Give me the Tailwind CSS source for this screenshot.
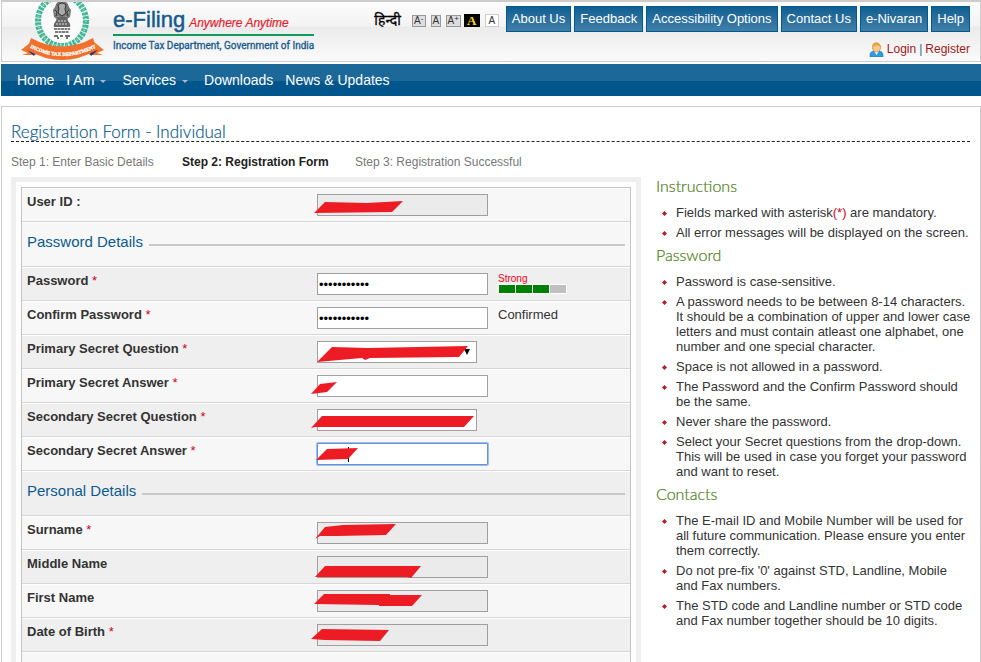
<!DOCTYPE html>
<html lang="en">
<head>
<meta charset="utf-8">
<title>e-Filing - Registration Form</title>
<script src="https://cdn.jsdelivr.net/npm/@tailwindcss/browser@4"></script>
</head>
<body class="h-screen overflow-hidden bg-white font-['Liberation_Sans',Arial,sans-serif] text-[13px] leading-[15px] text-[#333]">
<header class="ml-px border border-t-4 border-[#ccc] flex justify-between h-16 -mt-0.5 bg-[linear-gradient(#fcfcfc_0%,#f3f3f3_41%,#ebebeb_42%,#fafafa_100%)]">
  <a href="#" class="flex pl-[19px]" aria-label="Income Tax Department home">
    <svg class="w-[84px] h-[60px] shrink-0" viewBox="0 0 84 60">
      <g transform="translate(0 -2)">
      <ellipse cx="41" cy="21" rx="24" ry="25" fill="none" stroke="#3fb596" stroke-width="6" stroke-dasharray="3 1"/>
      <ellipse cx="41" cy="21" rx="24" ry="25" fill="none" stroke="#9bdcc9" stroke-width="2" stroke-dasharray="1 2"/>
      <ellipse cx="41" cy="21" rx="20" ry="22" fill="#fafafa"/>
      <path d="M34 7q1-6 7-6t7 6l2 3-1 7-3 2-1-3-2 4h-4l-2-4-1 3-3-2-1-7z" fill="#777"/>
      <path d="M37 5q4-4 8 0l-1 4 1 4-4 3-4-3 1-4zM34 10l2 2-1 4M48 10l-2 2 1 4" fill="#aaa" stroke="#333" stroke-width="1"/>
      <path d="M36 17h10l1 4q3 3 2 6H33q-1-3 2-6z" fill="#666"/>
      <path d="M37 21h8M35 24h12" stroke="#ddd" stroke-dasharray="2 1"/>
      <path d="M33 29h16M34 32h14" stroke="#555" stroke-width="1.5" stroke-dasharray="3 .5"/>
      <path d="M33 36h4M39 36h3M44 36h5M36 38h2M45 38h2" stroke="#444" stroke-width="1.5"/>
      <path d="M0 50l10-8 5 13H1l6-2zM83 50l-10-8-5 13h14l-6-2z" fill="#f0782c"/>
      <path d="M6 50l9 2-2 4zM77 50l-9 2 2 4z" fill="#24348d"/>
      <path d="M10 38Q41 55 72 38L76 50Q41 70 6 50z" fill="#f0702c"/>
      <path id="ribbon" d="M8 47Q41 65 76 47" fill="none"/>
      <text class="font-['Liberation_Serif',serif] font-bold" font-size="5" fill="#fff" stroke="#fff" stroke-width=".3"><textPath href="#ribbon" startOffset="50%" text-anchor="middle">INCOME TAX DEPARTMENT</textPath></text>
      </g>
    </svg>
    <span class="pl-2 pt-1.5 flex flex-col">
      <span class="flex items-baseline gap-1 border-b-2 border-[#0c9b5c] pr-3.5 h-7"><span class="text-[22px] leading-6 text-[#165b8d] [-webkit-text-stroke:0.5px]">e-Filing</span><em class="text-[12px] text-[#e8202c] [-webkit-text-stroke:0.2px]">Anywhere Anytime</em></span>
      <span class="text-[10px] leading-4 text-[#165b8d] pt-0.5 font-['Roboto',sans-serif] [-webkit-text-stroke:0.3px] whitespace-nowrap">Income Tax Department, Government of India</span>
    </span>
  </a>
  <div class="pr-2.5 pt-1 flex flex-col items-end">
    <div class="flex items-start gap-[3px] whitespace-nowrap">
      <a href="#" lang="hi" class="text-[14px] leading-7 text-black pr-2 font-['Noto_Sans','Lohit_Devanagari',sans-serif] [-webkit-text-stroke:0.3px]">हिन्दी</a>
      <div class="flex gap-[5px] items-center pt-2 pr-1 text-[10px] leading-[10px] text-[#333]">
        <button class="border border-[#999] bg-[#ddd] w-3.5 h-3 flex justify-center">A<span class="text-[8px] leading-[5px]">-</span></button>
        <button class="border border-[#999] bg-[#ddd] w-2.5 h-3 flex justify-center">A</button>
        <button class="border border-[#999] bg-[#ddd] w-[15px] h-3 flex justify-center">A<span class="text-[8px] leading-[6px]">+</span></button>
        <button class="bg-black text-[#fd0] font-bold font-['Liberation_Serif',serif] text-[13px] w-4 h-[13px] -ml-0.5">A</button>
        <button class="border border-[#ccc] bg-white w-3.5 h-[13px]">A</button>
      </div>
      <nav class="flex gap-[3px] text-[13px] leading-6 text-white">
        <a href="#" class="border border-[#005a8e] bg-linear-to-b from-[#0d5f91] to-[#417fa8] px-[5px]">About Us</a>
        <a href="#" class="border border-[#005a8e] bg-linear-to-b from-[#0d5f91] to-[#417fa8] px-[5px]">Feedback</a>
        <a href="#" class="border border-[#005a8e] bg-linear-to-b from-[#0d5f91] to-[#417fa8] px-[5px]">Accessibility Options</a>
        <a href="#" class="border border-[#005a8e] bg-linear-to-b from-[#0d5f91] to-[#417fa8] px-[5px]">Contact Us</a>
        <a href="#" class="border border-[#005a8e] bg-linear-to-b from-[#0d5f91] to-[#417fa8] px-[5px]">e-Nivaran</a>
        <a href="#" class="border border-[#005a8e] bg-linear-to-b from-[#0d5f91] to-[#417fa8] px-[5px]">Help</a>
      </nav>
    </div>
    <div class="flex items-center gap-[3px] text-[12px] text-[#9c1c1c] pt-2">
      <svg class="size-[15px]" viewBox="0 0 15 15"><path d="M1 15v-3q1-3 4-3h5q3 0 4 3v3z" fill="#2f9be0" stroke="#1b6fb3" stroke-width=".5"/><path d="M5 9l2.500 4L10 9z" fill="#fff"/><ellipse cx="7.500" cy="5.500" rx="4" ry="4.500" fill="#f8c98c" stroke="#c98a3c" stroke-width=".8"/><path d="M3.500 5Q3 0 7.500.5T11.500 5Q9 2.500 7 3.500T3.500 5z" fill="#e9a03a"/></svg>
      <a href="#">Login</a><span class="text-[#1c6898]">|</span><a href="#">Register</a>
    </div>
  </div>
</header>
<nav class="ml-px mt-0.5 h-8 bg-[linear-gradient(#1c6898_17px,#00568c_17px)] text-white text-[14px] leading-8 flex pl-4 whitespace-nowrap">
  <a href="#" class="pr-3">Home</a>
  <a href="#" class="pr-4 flex items-center gap-1.5">I Am <svg class="w-1.5 h-1 mt-1" viewBox="0 0 6 4"><path d="M0 0h6L3 3z" fill="#a9b8c4"/></svg></a>
  <a href="#" class="pr-4 flex items-center gap-1.5">Services <svg class="w-1.5 h-1 mt-1" viewBox="0 0 6 4"><path d="M0 0h6L3 3z" fill="#a9b8c4"/></svg></a>
  <a href="#" class="pr-3">Downloads</a>
  <a href="#">News &amp; Updates</a>
</nav>
<main class="ml-px mt-2.5 border border-[#ccc] pl-[9px] pr-2.5">
  <h1 class="pt-4 h-[35px] border-b border-dashed border-[#222] text-[17px] leading-[18px] text-[#0b5a8f] font-['Lato',sans-serif] font-light [-webkit-text-stroke:0.2px]">Registration Form - Individual</h1>
  <ol class="flex text-[12px] leading-4 text-[#777] mt-3">
    <li class="w-[171px]">Step 1: Enter Basic Details</li>
    <li class="w-[173px] font-bold text-[#222]">Step 2: Registration Form</li>
    <li>Step 3: Registration Successful</li>
  </ol>
  <div class="flex gap-[15px] items-start mt-[7px] -mr-1.5">
    <form class="flex-1 border-[5px] border-[#efefef] p-[5px]">
      <div class="border border-[#c4c4c4]">
        <div class="flex h-[34px] border-t border-t-white border-b border-b-[#d6d6d6] bg-[#f7f7f7] pl-[5px]">
          <label for="uid" class="w-[290px] pt-1 leading-[18px] font-bold">User ID :</label>
          <div class="relative pt-[5px]"><input id="uid" readonly class="block w-[171px] h-[22px] border border-[#a0a0a0] bg-[#ebebeb] px-0.5"><svg class="absolute left-0 top-[5px] w-40 h-[22px] overflow-visible pointer-events-none" viewBox="0 0 160 22"><path d="M-3 19L8 8 50 9 86 7 75 18z" fill="#ed1c24"/></svg></div>
        </div>
        <div class="h-[45px] border-t border-t-white border-b border-b-[#d6d6d6] bg-[#f7f7f7] px-[5px] flex items-start gap-1.5 pt-2.5">
          <h2 class="text-[15px] leading-[18px] text-[#0b5a8f]">Password Details</h2><span class="flex-1 h-0.5 bg-[#c8c8c8] mt-[11px]"></span>
        </div>
        <div class="flex h-[34px] border-t border-t-white border-b border-b-[#d6d6d6] bg-[#efefef] pl-[5px]">
          <label for="pw" class="w-[290px] pt-1 leading-[18px] font-bold">Password <span class="font-normal text-[#d0021b]">*</span></label>
          <div class="pt-[5px]"><input id="pw" type="password" value="password123" class="block w-[171px] h-[22px] border border-[#a0a0a0] bg-white text-black px-px"></div>
          <div class="pl-2.5 pt-1.5 text-[10px] leading-[10px] text-[#f0001c]">Strong
            <div class="flex gap-px border border-white bg-white"><i class="w-4 h-2 bg-[#008000]"></i><i class="w-4 h-2 bg-[#008000]"></i><i class="w-4 h-2 bg-[#008000]"></i><i class="w-4 h-2 bg-[#c0c0c0]"></i></div>
          </div>
        </div>
        <div class="flex h-[34px] border-t border-t-white border-b border-b-[#d6d6d6] bg-[#f7f7f7] pl-[5px]">
          <label for="cpw" class="w-[290px] pt-1 leading-[18px] font-bold">Confirm Password <span class="font-normal text-[#d0021b]">*</span></label>
          <div class="pt-[5px]"><input id="cpw" type="password" value="password123" class="block w-[171px] h-[22px] border border-[#a0a0a0] bg-white text-black px-px"></div>
          <span class="pl-2.5 pt-1 leading-[18px]">Confirmed</span>
        </div>
        <div class="flex h-[34px] border-t border-t-white border-b border-b-[#d6d6d6] bg-[#efefef] pl-[5px]">
          <label for="psq" class="w-[290px] pt-1 leading-[18px] font-bold">Primary Secret Question <span class="font-normal text-[#d0021b]">*</span></label>
          <div class="relative pt-[5px]"><select id="psq" class="block appearance-none w-40 h-[22px] border border-[#a0a0a0] bg-white px-1"><option></option></select><svg class="absolute left-0 top-[5px] w-40 h-[22px] overflow-visible pointer-events-none" viewBox="0 0 160 22"><path d="M147 8h6l-3 6z" fill="#000"/><path d="M0 21L15 6 51 7 151 5 142 16 53 17 48 19 45 17z" fill="#ed1c24"/></svg></div>
        </div>
        <div class="flex h-[34px] border-t border-t-white border-b border-b-[#d6d6d6] bg-[#f7f7f7] pl-[5px]">
          <label for="psa" class="w-[290px] pt-1 leading-[18px] font-bold">Primary Secret Answer <span class="font-normal text-[#d0021b]">*</span></label>
          <div class="relative pt-[5px]"><input id="psa" class="block w-[171px] h-[22px] border border-[#a0a0a0] bg-white px-0.5"><svg class="absolute left-0 top-[5px] w-40 h-[22px] overflow-visible pointer-events-none" viewBox="0 0 160 22"><path d="M-6 19L3 9 20 7 10 17z" fill="#ed1c24"/></svg></div>
        </div>
        <div class="flex h-[34px] border-t border-t-white border-b border-b-[#d6d6d6] bg-[#efefef] pl-[5px]">
          <label for="ssq" class="w-[290px] pt-1 leading-[18px] font-bold">Secondary Secret Question <span class="font-normal text-[#d0021b]">*</span></label>
          <div class="relative pt-[5px]"><select id="ssq" class="block appearance-none w-40 h-[22px] border border-[#a0a0a0] bg-white px-1"><option></option></select><svg class="absolute left-0 top-[5px] w-40 h-[22px] overflow-visible pointer-events-none" viewBox="0 0 160 22"><path d="M-6 19L5 7H157L147 18H-2z" fill="#ed1c24"/></svg></div>
        </div>
        <div class="flex h-[34px] border-t border-t-white border-b border-b-[#d6d6d6] bg-[#f7f7f7] pl-[5px]">
          <label for="ssa" class="w-[290px] pt-1 leading-[18px] font-bold">Secondary Secret Answer <span class="font-normal text-[#d0021b]">*</span></label>
          <div class="relative pt-[5px]"><input id="ssa" class="block w-[171px] h-[22px] border border-[#6a92d8] ring-1 ring-[#9dbcf0] rounded-[1px] bg-white px-0.5"><svg class="absolute left-0 top-[5px] w-40 h-[22px] overflow-visible pointer-events-none" viewBox="0 0 160 22"><path d="M31 4h1v15h-1z"/><path d="M-1 17L10 6 41 5 31 16z" fill="#ed1c24"/></svg></div>
        </div>
        <div class="h-[45px] border-t border-t-white border-b border-b-[#d6d6d6] bg-[#efefef] px-[5px] flex items-start gap-1.5 pt-2.5">
          <h2 class="text-[15px] leading-[18px] text-[#0b5a8f]">Personal Details</h2><span class="flex-1 h-0.5 bg-[#c8c8c8] mt-[11px]"></span>
        </div>
        <div class="flex h-[34px] border-t border-t-white border-b border-b-[#d6d6d6] bg-[#f7f7f7] pl-[5px]">
          <label for="sn" class="w-[290px] pt-1 leading-[18px] font-bold">Surname <span class="font-normal text-[#d0021b]">*</span></label>
          <div class="relative pt-[5px]"><input id="sn" readonly class="block w-[171px] h-[22px] border border-[#a0a0a0] bg-[#ebebeb] px-0.5"><svg class="absolute left-0 top-[5px] w-40 h-[22px] overflow-visible pointer-events-none" viewBox="0 0 160 22"><path d="M-2 17L8 5 26 3 79 2 69 13 20 14 3 14z" fill="#ed1c24"/></svg></div>
        </div>
        <div class="flex h-[34px] border-t border-t-white border-b border-b-[#d6d6d6] bg-[#efefef] pl-[5px]">
          <label for="mn" class="w-[290px] pt-1 leading-[18px] font-bold">Middle Name</label>
          <div class="relative pt-[5px]"><input id="mn" readonly class="block w-[171px] h-[22px] border border-[#a0a0a0] bg-[#ebebeb] px-0.5"><svg class="absolute left-0 top-[5px] w-40 h-[22px] overflow-visible pointer-events-none" viewBox="0 0 160 22"><path d="M-2 21L8 10H104L94 22 90 21z" fill="#ed1c24"/></svg></div>
        </div>
        <div class="flex h-[34px] border-t border-t-white border-b border-b-[#d6d6d6] bg-[#f7f7f7] pl-[5px]">
          <label for="fn" class="w-[290px] pt-1 leading-[18px] font-bold">First Name</label>
          <div class="relative pt-[5px]"><input id="fn" readonly class="block w-[171px] h-[22px] border border-[#a0a0a0] bg-[#ebebeb] px-0.5"><svg class="absolute left-0 top-[5px] w-40 h-[22px] overflow-visible pointer-events-none" viewBox="0 0 160 22"><path d="M-3 14L7 4H73V5H105L95 16H62V15z" fill="#ed1c24"/></svg></div>
        </div>
        <div class="flex h-[34px] border-t border-t-white border-b border-b-[#d6d6d6] bg-[#efefef] pl-[5px]">
          <label for="dob" class="w-[290px] pt-1 leading-[18px] font-bold">Date of Birth <span class="font-normal text-[#d0021b]">*</span></label>
          <div class="relative pt-[5px]"><input id="dob" readonly class="block w-[171px] h-[22px] border border-[#a0a0a0] bg-[#ebebeb] px-0.5"><svg class="absolute left-0 top-[5px] w-40 h-[22px] overflow-visible pointer-events-none" viewBox="0 0 160 22"><path d="M-6 15L5 5 72 6 63 17 8 16z" fill="#ed1c24"/></svg></div>
        </div>
        <div class="h-[34px] border-t border-t-white bg-[#f7f7f7]"></div>
      </div>
    </form>
    <aside class="w-[320px]">
      <h2 class="text-[16px] leading-[18px] text-[#4b7a14] font-['Lato',sans-serif] font-light [-webkit-text-stroke:0.2px] mb-2.5">Instructions</h2>
      <ul class="flex flex-col gap-[5px] pl-5 mb-1.5">
        <li class="relative"><svg class="absolute -left-3.5 top-[6px] size-[5px]" viewBox="0 0 5 5"><path d="M2.500 0L5 2.500 2.500 5 0 2.500z" fill="#b0202c"/></svg>Fields marked with asterisk<span class="text-[#d0021b]">(*)</span> are mandatory.</li>
        <li class="relative"><svg class="absolute -left-3.5 top-[6px] size-[5px]" viewBox="0 0 5 5"><path d="M2.500 0L5 2.500 2.500 5 0 2.500z" fill="#b0202c"/></svg>All error messages will be displayed on the screen.</li>
      </ul>
      <h2 class="text-[16px] leading-[18px] text-[#4b7a14] font-['Lato',sans-serif] font-light [-webkit-text-stroke:0.2px] mb-2.5">Password</h2>
      <ul class="flex flex-col gap-[5px] pl-5 mb-1.5">
        <li class="relative"><svg class="absolute -left-3.5 top-[6px] size-[5px]" viewBox="0 0 5 5"><path d="M2.500 0L5 2.500 2.500 5 0 2.500z" fill="#b0202c"/></svg>Password is case-sensitive.</li>
        <li class="relative"><svg class="absolute -left-3.5 top-[6px] size-[5px]" viewBox="0 0 5 5"><path d="M2.500 0L5 2.500 2.500 5 0 2.500z" fill="#b0202c"/></svg>A password needs to be between 8-14 characters. It&nbsp;should be a combination of upper and lower case letters and must contain atleast one alphabet, one number and one special character.</li>
        <li class="relative"><svg class="absolute -left-3.5 top-[6px] size-[5px]" viewBox="0 0 5 5"><path d="M2.500 0L5 2.500 2.500 5 0 2.500z" fill="#b0202c"/></svg>Space is not allowed in a password.</li>
        <li class="relative"><svg class="absolute -left-3.5 top-[6px] size-[5px]" viewBox="0 0 5 5"><path d="M2.500 0L5 2.500 2.500 5 0 2.500z" fill="#b0202c"/></svg>The Password and the Confirm Password should be&nbsp;the same.</li>
        <li class="relative"><svg class="absolute -left-3.5 top-[6px] size-[5px]" viewBox="0 0 5 5"><path d="M2.500 0L5 2.500 2.500 5 0 2.500z" fill="#b0202c"/></svg>Never share the password.</li>
        <li class="relative"><svg class="absolute -left-3.5 top-[6px] size-[5px]" viewBox="0 0 5 5"><path d="M2.500 0L5 2.500 2.500 5 0 2.500z" fill="#b0202c"/></svg>Select your Secret questions from the drop-down. This will be used in case you forget your password and want to reset.</li>
      </ul>
      <h2 class="text-[16px] leading-[18px] text-[#4b7a14] font-['Lato',sans-serif] font-light [-webkit-text-stroke:0.2px] mb-2.5">Contacts</h2>
      <ul class="flex flex-col gap-[5px] pl-5">
        <li class="relative"><svg class="absolute -left-3.5 top-[6px] size-[5px]" viewBox="0 0 5 5"><path d="M2.500 0L5 2.500 2.500 5 0 2.500z" fill="#b0202c"/></svg>The E-mail ID and Mobile Number will be used for all future communication. Please ensure you enter them correctly.</li>
        <li class="relative"><svg class="absolute -left-3.5 top-[6px] size-[5px]" viewBox="0 0 5 5"><path d="M2.500 0L5 2.500 2.500 5 0 2.500z" fill="#b0202c"/></svg>Do not pre-fix '0' against STD, Landline, Mobile and&nbsp;Fax numbers.</li>
        <li class="relative"><svg class="absolute -left-3.5 top-[6px] size-[5px]" viewBox="0 0 5 5"><path d="M2.500 0L5 2.500 2.500 5 0 2.500z" fill="#b0202c"/></svg>The STD code and Landline number or STD code and Fax number together should be 10 digits.</li>
      </ul>
    </aside>
  </div>
</main>
</body>
</html>
